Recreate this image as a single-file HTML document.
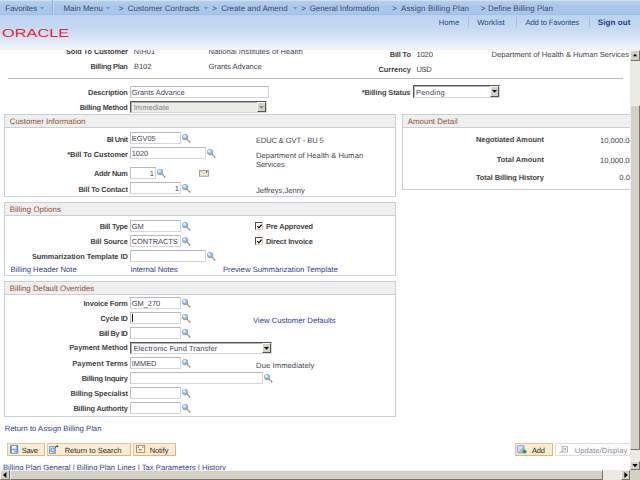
<!DOCTYPE html><html><head><meta charset='utf-8'><title>Define Billing Plan</title><style>
html,body{margin:0;padding:0;}
body{width:640px;height:480px;overflow:hidden;position:relative;background:#fff;font-family:"Liberation Sans",Arial,sans-serif;font-size:7.6px;color:#3c3c3c;text-rendering:geometricPrecision;}
.a{position:absolute;white-space:nowrap;line-height:10px;height:10px;}
.in{position:absolute;box-sizing:border-box;background:#fff;border:1px solid #d6d6d6;border-top-color:#b9b9b9;border-left-color:#c2c2c2;}
.gh{position:absolute;box-sizing:border-box;background:#efefef;border:1px solid #c9d1d8;}
.gb{position:absolute;box-sizing:border-box;border:1px solid #c9d1d8;border-top:none;background:#fff;}
.btn{position:absolute;box-sizing:border-box;border:1px solid #e9c590;border-bottom-color:#e2b676;border-right-color:#e2b676;background:#fcedd2;}
.sel{position:absolute;box-sizing:border-box;background:#fff;border:1px solid #555;border-right-color:#d6d6d2;border-bottom-color:#d6d6d2;box-shadow:inset 1px 1px 0 #b4b4b4;}
.dd{position:absolute;box-sizing:border-box;background:#d4d0c8;border:1px solid #f8f8f8;border-right-color:#555;border-bottom-color:#555;}
svg{position:absolute;overflow:visible}
</style></head><body>
<div class='a' style='left:65.95px;top:47.00px;font-size:7.4px;font-weight:bold;letter-spacing:-0.077px;color:#424242'>Sold To Customer</div>
<div class='a' style='left:133.45px;top:47.00px;font-size:7.6px;letter-spacing:0.055px;color:#47434f'>NIH01</div>
<div class='a' style='left:208.45px;top:47.00px;font-size:7.6px;letter-spacing:0.049px;color:#47434f'>National Institutes of Health</div>
<div class='a' style='left:389.70px;top:50.00px;font-size:7.4px;font-weight:bold;letter-spacing:-0.130px;color:#424242'>Bill To</div>
<div class='a' style='left:416.45px;top:50.00px;font-size:7.6px;letter-spacing:-0.135px;color:#47434f'>1020</div>
<div class='a' style='left:491.45px;top:50.00px;font-size:7.6px;letter-spacing:0.009px;color:#47434f'>Department of Health &amp; Human Services</div>
<div class='a' style='left:90.45px;top:62.00px;font-size:7.4px;font-weight:bold;letter-spacing:-0.255px;color:#424242'>Billing Plan</div>
<div class='a' style='left:133.95px;top:62.00px;font-size:7.6px;letter-spacing:-0.083px;color:#47434f'>B102</div>
<div class='a' style='left:208.45px;top:62.00px;font-size:7.6px;letter-spacing:-0.060px;color:#47434f'>Grants Advance</div>
<div class='a' style='left:378.45px;top:65.00px;font-size:7.4px;font-weight:bold;letter-spacing:0.007px;color:#424242'>Currency</div>
<div class='a' style='left:416.45px;top:65.00px;font-size:7.6px;letter-spacing:-0.398px;color:#47434f'>USD</div>
<div style='position:absolute;left:8px;top:78px;width:615px;height:1px;background:#bdbdbd'></div>
<div class='a' style='left:87.95px;top:88.00px;font-size:7.4px;font-weight:bold;letter-spacing:-0.071px;color:#424242'>Description</div>
<div class='in' style='left:130px;top:86px;width:139px;height:12px'></div>
<div class='a' style='left:131.70px;top:88.00px;font-size:7.45px;letter-spacing:0.006px;color:#4b4060'>Grants Advance</div>
<div class='a' style='left:361.70px;top:88.00px;font-size:7.4px;font-weight:bold;letter-spacing:-0.097px;color:#424242'>*Billing Status</div>
<div class='sel' style='left:413px;top:85px;width:87px;height:13px;'></div>
<div class='dd' style='left:490px;top:86px;width:9px;height:11px'></div>
<svg style='left:492px;top:90.3px;width:5px;height:3px' viewBox='0 0 5 3'><path d='M0 0H5L2.5 2.8Z' fill='#000'/></svg>
<div class='a' style='left:415.95px;top:88.00px;font-size:7.45px;letter-spacing:0.242px;color:#4b4060'>Pending</div>
<div class='a' style='left:79.70px;top:103.00px;font-size:7.4px;font-weight:bold;letter-spacing:-0.208px;color:#424242'>Billing Method</div>
<div class='sel' style='left:130px;top:101px;width:137px;height:12px;background:#ebebe8;'></div>
<div class='dd' style='left:257px;top:102px;width:9px;height:10px'></div>
<svg style='left:259px;top:105.8px;width:5px;height:3px' viewBox='0 0 5 3'><path d='M0 0H5L2.5 2.8Z' fill='#8a8a8a'/></svg>
<div class='a' style='left:133.70px;top:103.00px;font-size:7.45px;letter-spacing:0.096px;color:#808080'>Immediate</div>
<div class='gh' style='left:4px;top:114px;width:392px;height:14px'></div>
<div class='gb' style='left:4px;top:128px;width:392px;height:69px'></div>
<div class='a' style='left:9.70px;top:117.00px;font-size:7.9px;letter-spacing:-0.007px;color:#96502f'>Customer Information</div>
<div class='a' style='left:106.70px;top:135.00px;font-size:7.4px;font-weight:bold;letter-spacing:-0.435px;color:#424242'>BI Unit</div>
<div class='in' style='left:130px;top:132px;width:51px;height:12px'></div>
<div class='a' style='left:131.70px;top:134.00px;font-size:7.45px;color:#4b4060'>EGV05</div>
<svg style='left:181.8px;top:133.7px;width:10px;height:10px' viewBox='0 0 10 10'><line x1='5.2' y1='5.2' x2='7.7' y2='7.8' stroke='#e2923c' stroke-width='1.3' stroke-linecap='round'/><circle cx='7.8' cy='8' r='.6' fill='#4a70c4'/><circle cx='3.1' cy='3.1' r='2.8' fill='#6eaeec' stroke='#8f9aa8' stroke-width='.6'/><circle cx='2.7' cy='2.6' r='2' fill='#a9d1f8'/><circle cx='2.3' cy='2.2' r='1.1' fill='#e4f1ff'/></svg>
<div class='a' style='left:255.90px;top:136.00px;font-size:7.6px;letter-spacing:-0.132px;color:#47434f'>EDUC &amp; GVT - BU 5</div>
<div class='a' style='left:67.20px;top:150.00px;font-size:7.4px;font-weight:bold;letter-spacing:-0.048px;color:#424242'>*Bill To Customer</div>
<div class='in' style='left:130px;top:147px;width:76px;height:12px'></div>
<div class='a' style='left:131.70px;top:149.00px;font-size:7.45px;color:#4b4060'>1020</div>
<svg style='left:206.8px;top:148.8px;width:10px;height:10px' viewBox='0 0 10 10'><line x1='5.2' y1='5.2' x2='7.7' y2='7.8' stroke='#e2923c' stroke-width='1.3' stroke-linecap='round'/><circle cx='7.8' cy='8' r='.6' fill='#4a70c4'/><circle cx='3.1' cy='3.1' r='2.8' fill='#6eaeec' stroke='#8f9aa8' stroke-width='.6'/><circle cx='2.7' cy='2.6' r='2' fill='#a9d1f8'/><circle cx='2.3' cy='2.2' r='1.1' fill='#e4f1ff'/></svg>
<div class='a' style='left:255.90px;top:151.00px;font-size:7.6px;letter-spacing:0.050px;color:#47434f'>Department of Health &amp; Human</div>
<div class='a' style='left:255.90px;top:160.00px;font-size:7.6px;letter-spacing:-0.046px;color:#47434f'>Services</div>
<div class='a' style='left:93.95px;top:169.00px;font-size:7.4px;font-weight:bold;letter-spacing:-0.255px;color:#424242'>Addr Num</div>
<div class='in' style='left:130px;top:167px;width:26px;height:12px'></div>
<div class='a' style='right:486.20px;text-align:right;top:169.00px;font-size:7.45px;color:#4b4060'>1</div>
<svg style='left:157.0px;top:168.5px;width:10px;height:10px' viewBox='0 0 10 10'><line x1='5.2' y1='5.2' x2='7.7' y2='7.8' stroke='#e2923c' stroke-width='1.3' stroke-linecap='round'/><circle cx='7.8' cy='8' r='.6' fill='#4a70c4'/><circle cx='3.1' cy='3.1' r='2.8' fill='#6eaeec' stroke='#8f9aa8' stroke-width='.6'/><circle cx='2.7' cy='2.6' r='2' fill='#a9d1f8'/><circle cx='2.3' cy='2.2' r='1.1' fill='#e4f1ff'/></svg>
<svg style='left:198.8px;top:170.2px;width:10px;height:6.6px' viewBox='0 0 10 6.6'><rect x='.4' y='.4' width='9.2' height='5.8' fill='#f6edc9' stroke='#8a8a86' stroke-width='.8'/><path d='M.6 .6L5 3.8L9.4 .6' fill='none' stroke='#b9ad86' stroke-width='.6'/><rect x='7' y='1' width='1.2' height='1.6' fill='#b45'/></svg>
<div class='a' style='left:78.45px;top:185.00px;font-size:7.4px;font-weight:bold;letter-spacing:-0.153px;color:#424242'>Bill To Contact</div>
<div class='in' style='left:130px;top:182px;width:51px;height:12px'></div>
<div class='a' style='right:461.20px;text-align:right;top:184.00px;font-size:7.45px;color:#4b4060'>1</div>
<svg style='left:181.7px;top:183.8px;width:10px;height:10px' viewBox='0 0 10 10'><line x1='5.2' y1='5.2' x2='7.7' y2='7.8' stroke='#e2923c' stroke-width='1.3' stroke-linecap='round'/><circle cx='7.8' cy='8' r='.6' fill='#4a70c4'/><circle cx='3.1' cy='3.1' r='2.8' fill='#6eaeec' stroke='#8f9aa8' stroke-width='.6'/><circle cx='2.7' cy='2.6' r='2' fill='#a9d1f8'/><circle cx='2.3' cy='2.2' r='1.1' fill='#e4f1ff'/></svg>
<div class='a' style='left:255.90px;top:186.00px;font-size:7.6px;letter-spacing:-0.002px;color:#47434f'>Jeffreys,Jenny</div>
<div class='gh' style='left:402px;top:114px;width:240px;height:14px'></div>
<div class='gb' style='left:402px;top:128px;width:240px;height:62px'></div>
<div class='a' style='left:407.70px;top:117.00px;font-size:7.9px;letter-spacing:0.036px;color:#96502f'>Amount Detail</div>
<div class='a' style='left:475.95px;top:135.00px;font-size:7.4px;font-weight:bold;letter-spacing:0.007px;color:#424242'>Negotiated Amount</div>
<div class='a' style='left:600.00px;top:136.00px;font-size:7.6px;color:#47434f'>10,000.00</div>
<div class='a' style='left:496.70px;top:155.00px;font-size:7.4px;font-weight:bold;letter-spacing:0.041px;color:#424242'>Total Amount</div>
<div class='a' style='left:600.00px;top:156.00px;font-size:7.6px;color:#47434f'>10,000.00</div>
<div class='a' style='left:475.95px;top:173.00px;font-size:7.4px;font-weight:bold;letter-spacing:-0.071px;color:#424242'>Total Billing History</div>
<div class='a' style='left:619.30px;top:173.00px;font-size:7.6px;color:#47434f'>0.00</div>
<div class='gh' style='left:4px;top:202px;width:392px;height:14px'></div>
<div class='gb' style='left:4px;top:216px;width:392px;height:60px'></div>
<div class='a' style='left:9.70px;top:205.00px;font-size:7.9px;letter-spacing:0.057px;color:#96502f'>Billing Options</div>
<div class='a' style='left:99.70px;top:222.00px;font-size:7.4px;font-weight:bold;letter-spacing:-0.258px;color:#424242'>Bill Type</div>
<div class='in' style='left:130px;top:220px;width:51px;height:12px'></div>
<div class='a' style='left:131.70px;top:222.00px;font-size:7.45px;color:#4b4060'>GM</div>
<svg style='left:181.7px;top:221.9px;width:10px;height:10px' viewBox='0 0 10 10'><line x1='5.2' y1='5.2' x2='7.7' y2='7.8' stroke='#e2923c' stroke-width='1.3' stroke-linecap='round'/><circle cx='7.8' cy='8' r='.6' fill='#4a70c4'/><circle cx='3.1' cy='3.1' r='2.8' fill='#6eaeec' stroke='#8f9aa8' stroke-width='.6'/><circle cx='2.7' cy='2.6' r='2' fill='#a9d1f8'/><circle cx='2.3' cy='2.2' r='1.1' fill='#e4f1ff'/></svg>
<div class='a' style='left:90.45px;top:237.00px;font-size:7.4px;font-weight:bold;letter-spacing:-0.116px;color:#424242'>Bill Source</div>
<div class='in' style='left:130px;top:235px;width:51px;height:12px'></div>
<div class='a' style='left:131.70px;top:237.00px;font-size:7.45px;letter-spacing:-0.023px;color:#4b4060'>CONTRACTS</div>
<svg style='left:181.7px;top:236.9px;width:10px;height:10px' viewBox='0 0 10 10'><line x1='5.2' y1='5.2' x2='7.7' y2='7.8' stroke='#e2923c' stroke-width='1.3' stroke-linecap='round'/><circle cx='7.8' cy='8' r='.6' fill='#4a70c4'/><circle cx='3.1' cy='3.1' r='2.8' fill='#6eaeec' stroke='#8f9aa8' stroke-width='.6'/><circle cx='2.7' cy='2.6' r='2' fill='#a9d1f8'/><circle cx='2.3' cy='2.2' r='1.1' fill='#e4f1ff'/></svg>
<div class='a' style='left:31.90px;top:252.00px;font-size:7.4px;font-weight:bold;letter-spacing:-0.016px;color:#424242'>Summarization Template ID</div>
<div class='in' style='left:130px;top:250px;width:76px;height:12px'></div>
<svg style='left:206.9px;top:251.9px;width:10px;height:10px' viewBox='0 0 10 10'><line x1='5.2' y1='5.2' x2='7.7' y2='7.8' stroke='#e2923c' stroke-width='1.3' stroke-linecap='round'/><circle cx='7.8' cy='8' r='.6' fill='#4a70c4'/><circle cx='3.1' cy='3.1' r='2.8' fill='#6eaeec' stroke='#8f9aa8' stroke-width='.6'/><circle cx='2.7' cy='2.6' r='2' fill='#a9d1f8'/><circle cx='2.3' cy='2.2' r='1.1' fill='#e4f1ff'/></svg>
<div style='position:absolute;left:255px;top:222px;width:8px;height:8px;box-sizing:border-box;border:1px solid #505050;border-right-color:#d8d4cc;border-bottom-color:#d8d4cc;background:#fff'></div>
<svg style='left:256.5px;top:223.5px;width:5px;height:5px' viewBox='0 0 5 5'><path d='M.4 2.2L1.9 3.8L4.6 .6' fill='none' stroke='#000' stroke-width='1.2'/></svg>
<div class='a' style='left:265.90px;top:222.00px;font-size:7.4px;font-weight:bold;letter-spacing:-0.103px;color:#424242'>Pre Approved</div>
<div style='position:absolute;left:255px;top:237px;width:8px;height:8px;box-sizing:border-box;border:1px solid #505050;border-right-color:#d8d4cc;border-bottom-color:#d8d4cc;background:#fff'></div>
<svg style='left:256.5px;top:238.5px;width:5px;height:5px' viewBox='0 0 5 5'><path d='M.4 2.2L1.9 3.8L4.6 .6' fill='none' stroke='#000' stroke-width='1.2'/></svg>
<div class='a' style='left:265.90px;top:237.00px;font-size:7.4px;font-weight:bold;letter-spacing:-0.109px;color:#424242'>Direct Invoice</div>
<div class='a' style='left:10.45px;top:265.00px;font-size:7.7px;letter-spacing:0.001px;color:#2b3c9c'>Billing Header Note</div>
<div class='a' style='left:130.45px;top:265.00px;font-size:7.7px;letter-spacing:-0.047px;color:#2b3c9c'>Internal Notes</div>
<div class='a' style='left:222.95px;top:265.00px;font-size:7.7px;letter-spacing:0.028px;color:#2b3c9c'>Preview Summarization Template</div>
<div class='gh' style='left:4px;top:281px;width:392px;height:14px'></div>
<div class='gb' style='left:4px;top:295px;width:392px;height:122px'></div>
<div class='a' style='left:9.70px;top:284.00px;font-size:7.9px;letter-spacing:-0.006px;color:#96502f'>Billing Default Overrides</div>
<div class='a' style='left:83.45px;top:299.00px;font-size:7.4px;font-weight:bold;letter-spacing:-0.141px;color:#424242'>Invoice Form</div>
<div class='in' style='left:130px;top:297px;width:51px;height:12px'></div>
<div class='a' style='left:131.70px;top:299.00px;font-size:7.45px;color:#4b4060'>GM_270</div>
<svg style='left:181.7px;top:299.1px;width:10px;height:10px' viewBox='0 0 10 10'><line x1='5.2' y1='5.2' x2='7.7' y2='7.8' stroke='#e2923c' stroke-width='1.3' stroke-linecap='round'/><circle cx='7.8' cy='8' r='.6' fill='#4a70c4'/><circle cx='3.1' cy='3.1' r='2.8' fill='#6eaeec' stroke='#8f9aa8' stroke-width='.6'/><circle cx='2.7' cy='2.6' r='2' fill='#a9d1f8'/><circle cx='2.3' cy='2.2' r='1.1' fill='#e4f1ff'/></svg>
<div class='a' style='left:100.45px;top:314.00px;font-size:7.4px;font-weight:bold;letter-spacing:-0.246px;color:#424242'>Cycle ID</div>
<div class='in' style='left:130px;top:312px;width:51px;height:12px'></div>
<svg style='left:181.7px;top:314.1px;width:10px;height:10px' viewBox='0 0 10 10'><line x1='5.2' y1='5.2' x2='7.7' y2='7.8' stroke='#e2923c' stroke-width='1.3' stroke-linecap='round'/><circle cx='7.8' cy='8' r='.6' fill='#4a70c4'/><circle cx='3.1' cy='3.1' r='2.8' fill='#6eaeec' stroke='#8f9aa8' stroke-width='.6'/><circle cx='2.7' cy='2.6' r='2' fill='#a9d1f8'/><circle cx='2.3' cy='2.2' r='1.1' fill='#e4f1ff'/></svg>
<div style='position:absolute;left:132px;top:314px;width:1px;height:8px;background:#111'></div>
<div class='a' style='left:252.90px;top:316.00px;font-size:7.7px;letter-spacing:0.022px;color:#2b3c9c'>View Customer Defaults</div>
<div class='a' style='left:98.95px;top:329.00px;font-size:7.4px;font-weight:bold;letter-spacing:-0.389px;color:#424242'>Bill By ID</div>
<div class='in' style='left:130px;top:327px;width:51px;height:12px'></div>
<svg style='left:181.7px;top:329.1px;width:10px;height:10px' viewBox='0 0 10 10'><line x1='5.2' y1='5.2' x2='7.7' y2='7.8' stroke='#e2923c' stroke-width='1.3' stroke-linecap='round'/><circle cx='7.8' cy='8' r='.6' fill='#4a70c4'/><circle cx='3.1' cy='3.1' r='2.8' fill='#6eaeec' stroke='#8f9aa8' stroke-width='.6'/><circle cx='2.7' cy='2.6' r='2' fill='#a9d1f8'/><circle cx='2.3' cy='2.2' r='1.1' fill='#e4f1ff'/></svg>
<div class='a' style='left:69.20px;top:343.00px;font-size:7.4px;font-weight:bold;letter-spacing:-0.034px;color:#424242'>Payment Method</div>
<div class='sel' style='left:130px;top:342px;width:142px;height:12px;'></div>
<div class='dd' style='left:262px;top:343px;width:9px;height:10px'></div>
<svg style='left:264px;top:346.8px;width:5px;height:3px' viewBox='0 0 5 3'><path d='M0 0H5L2.5 2.8Z' fill='#000'/></svg>
<div class='a' style='left:133.45px;top:344.00px;font-size:7.45px;letter-spacing:0.118px;color:#4b4060'>Electronic Fund Transfer</div>
<div class='a' style='left:72.20px;top:359.00px;font-size:7.4px;font-weight:bold;letter-spacing:0.100px;color:#424242'>Payment Terms</div>
<div class='in' style='left:130px;top:357px;width:51px;height:12px'></div>
<div class='a' style='left:131.70px;top:359.00px;font-size:7.45px;color:#4b4060'>IMMED</div>
<svg style='left:181.7px;top:359.1px;width:10px;height:10px' viewBox='0 0 10 10'><line x1='5.2' y1='5.2' x2='7.7' y2='7.8' stroke='#e2923c' stroke-width='1.3' stroke-linecap='round'/><circle cx='7.8' cy='8' r='.6' fill='#4a70c4'/><circle cx='3.1' cy='3.1' r='2.8' fill='#6eaeec' stroke='#8f9aa8' stroke-width='.6'/><circle cx='2.7' cy='2.6' r='2' fill='#a9d1f8'/><circle cx='2.3' cy='2.2' r='1.1' fill='#e4f1ff'/></svg>
<div class='a' style='left:256.10px;top:361.00px;font-size:7.6px;letter-spacing:0.094px;color:#47434f'>Due Immediately</div>
<div class='a' style='left:81.70px;top:374.00px;font-size:7.4px;font-weight:bold;letter-spacing:-0.220px;color:#424242'>Billing Inquiry</div>
<div class='in' style='left:130px;top:372px;width:133px;height:12px'></div>
<svg style='left:263.7px;top:374.1px;width:10px;height:10px' viewBox='0 0 10 10'><line x1='5.2' y1='5.2' x2='7.7' y2='7.8' stroke='#e2923c' stroke-width='1.3' stroke-linecap='round'/><circle cx='7.8' cy='8' r='.6' fill='#4a70c4'/><circle cx='3.1' cy='3.1' r='2.8' fill='#6eaeec' stroke='#8f9aa8' stroke-width='.6'/><circle cx='2.7' cy='2.6' r='2' fill='#a9d1f8'/><circle cx='2.3' cy='2.2' r='1.1' fill='#e4f1ff'/></svg>
<div class='a' style='left:70.45px;top:389.00px;font-size:7.4px;font-weight:bold;letter-spacing:-0.099px;color:#424242'>Billing Specialist</div>
<div class='in' style='left:130px;top:387px;width:51px;height:12px'></div>
<svg style='left:181.7px;top:389.1px;width:10px;height:10px' viewBox='0 0 10 10'><line x1='5.2' y1='5.2' x2='7.7' y2='7.8' stroke='#e2923c' stroke-width='1.3' stroke-linecap='round'/><circle cx='7.8' cy='8' r='.6' fill='#4a70c4'/><circle cx='3.1' cy='3.1' r='2.8' fill='#6eaeec' stroke='#8f9aa8' stroke-width='.6'/><circle cx='2.7' cy='2.6' r='2' fill='#a9d1f8'/><circle cx='2.3' cy='2.2' r='1.1' fill='#e4f1ff'/></svg>
<div class='a' style='left:73.45px;top:404.00px;font-size:7.4px;font-weight:bold;letter-spacing:-0.172px;color:#424242'>Billing Authority</div>
<div class='in' style='left:130px;top:402px;width:51px;height:12px'></div>
<svg style='left:181.7px;top:404.1px;width:10px;height:10px' viewBox='0 0 10 10'><line x1='5.2' y1='5.2' x2='7.7' y2='7.8' stroke='#e2923c' stroke-width='1.3' stroke-linecap='round'/><circle cx='7.8' cy='8' r='.6' fill='#4a70c4'/><circle cx='3.1' cy='3.1' r='2.8' fill='#6eaeec' stroke='#8f9aa8' stroke-width='.6'/><circle cx='2.7' cy='2.6' r='2' fill='#a9d1f8'/><circle cx='2.3' cy='2.2' r='1.1' fill='#e4f1ff'/></svg>
<div class='a' style='left:4.70px;top:424.00px;font-size:7.7px;letter-spacing:0.006px;color:#2b3c9c'>Return to Assign Billing Plan</div>
<div class='btn' style='left:7px;top:443px;width:38px;height:13px;'></div>
<svg style='left:9.8px;top:445.4px;width:8.2px;height:8.6px' viewBox='0 0 8.2 8.6'><rect x='.4' y='.4' width='7.4' height='7.8' rx='.5' fill='#6c9ee4' stroke='#4a7cc8' stroke-width='.8'/><rect x='1.9' y='.9' width='4.4' height='2.9' fill='#f4f8fe'/><rect x='1.9' y='5' width='4.4' height='3' fill='#e4edfa'/><rect x='4.4' y='5.6' width='1.1' height='2' fill='#4a7cc8'/></svg>
<div class='a' style='left:21.70px;top:446.00px;font-size:7.5px;letter-spacing:-0.286px;color:#2a2a2a'>Save</div>
<div class='btn' style='left:47px;top:443px;width:84px;height:13px;'></div>
<svg style='left:49px;top:444.8px;width:11px;height:9.6px' viewBox='0 0 11 9.6'><rect x='.4' y='1.6' width='6' height='7' fill='#d6e6fa' stroke='#6a92d0' stroke-width='.8'/><circle cx='3.8' cy='5' r='2.1' fill='#a9d2f7' stroke='#4f7fc0' stroke-width='.7'/><line x1='5.2' y1='6.8' x2='6.8' y2='8.9' stroke='#e2923c' stroke-width='1.3'/><path d='M6.2 3C6.6 1.6 7.4 1 8.4 1.2' fill='none' stroke='#333' stroke-width='.8'/><path d='M7.6 .2L9.8 1.6L7.8 2.6Z' fill='#333'/></svg>
<div class='a' style='left:64.70px;top:446.00px;font-size:7.5px;letter-spacing:0.003px;color:#2a2a2a'>Return to Search</div>
<div class='btn' style='left:133px;top:443px;width:43px;height:13px;'></div>
<svg style='left:135.6px;top:445.4px;width:9.2px;height:7.8px' viewBox='0 0 9.2 7.8'><rect x='.5' y='.5' width='8.2' height='6.8' fill='#fffaf2' stroke='#b87d50' stroke-width='.9'/><circle cx='2.3' cy='2.2' r='.8' fill='#d8482c'/><circle cx='6.9' cy='2.2' r='.8' fill='#3fae4a'/><path d='M2.6 4.6H5.6' stroke='#b4642c' stroke-width='1.3'/></svg>
<div class='a' style='left:149.70px;top:446.00px;font-size:7.5px;letter-spacing:-0.084px;color:#2a2a2a'>Notify</div>
<div class='btn' style='left:515px;top:443px;width:38px;height:13px;'></div>
<svg style='left:517px;top:445.1px;width:10px;height:9px' viewBox='0 0 10 9'><rect x='.4' y='.4' width='6.6' height='7.6' rx='.9' fill='#9dbfee' stroke='#7a9fd6' stroke-width='.8'/><path d='M1 1H6.4L1 7.4Z' fill='#d3e3f9'/><path d='M7.6 4.6V8.8M5.5 6.7H9.7' stroke='#1f9a34' stroke-width='1.7'/></svg>
<div class='a' style='left:532.10px;top:446.00px;font-size:7.5px;letter-spacing:-0.230px;color:#2a2a2a'>Add</div>
<div class='btn' style='left:555px;top:443px;width:80px;height:13px;background:#fff;border-color:#dedede;'></div>
<svg style='left:559px;top:446px;width:9px;height:8px' viewBox='0 0 9 8'><rect x='3' y='.4' width='5.4' height='5.6' fill='#f6f6f6' stroke='#a8a8a8' stroke-width='.8'/><path d='M.4 7.2L3.2 5' stroke='#a0a0a0' stroke-width='1'/><path d='M5 2v2.4M6.4 2v2.4' stroke='#9a9a9a' stroke-width='.8'/></svg>
<div class='a' style='left:574.70px;top:446.00px;font-size:7.5px;letter-spacing:0.126px;color:#9487a3'>Update/Display</div>
<div class='a' style='left:2.90px;top:463.00px;font-size:7.7px;letter-spacing:0.008px;color:#2b3c9c'>Billing Plan General | Billing Plan Lines | Tax Parameters | History</div>
<div style='position:absolute;left:0;top:15px;width:640px;height:35px;background:linear-gradient(#bcd3f0 0%,#c6daf2 40%,#dfe9f8 75%,#f2f6fc 97%,#e4eaf2 100%)'></div>
<div style='position:absolute;left:0;top:0;width:640px;height:15px;background:linear-gradient(#b6cfee 0,#aac7ea 5px,#a8c5ea 14px);border-top:1px solid #cfdff4;border-bottom:1px solid #a0bee3;box-sizing:border-box'></div>
<div style='position:absolute;left:52px;top:0;width:1px;height:15px;background:#8fb1db'></div>
<div style='position:absolute;left:53px;top:0;width:1px;height:15px;background:#c4d8f1'></div>
<div class='a' style='left:5.20px;top:4.00px;font-size:8.0px;letter-spacing:-0.113px;color:#3c4b6b'>Favorites</div>
<svg style='left:39.5px;top:7px;width:4.4px;height:2.6px' viewBox='0 0 4.4 2.6'><path d='M0 0H4.4L2.2 2.6Z' fill='#6896d2'/></svg>
<div class='a' style='left:63.45px;top:4.00px;font-size:8.0px;letter-spacing:-0.010px;color:#3c4b6b'>Main Menu</div>
<svg style='left:105.5px;top:7px;width:4.4px;height:2.6px' viewBox='0 0 4.4 2.6'><path d='M0 0H4.4L2.2 2.6Z' fill='#6896d2'/></svg>
<div class='a' style='left:118.70px;top:4.00px;font-size:8.0px;color:#3c4b6b'>></div>
<div class='a' style='left:127.70px;top:4.00px;font-size:8.0px;letter-spacing:0.021px;color:#3c4b6b'>Customer Contracts</div>
<svg style='left:203.75px;top:7px;width:4.4px;height:2.6px' viewBox='0 0 4.4 2.6'><path d='M0 0H4.4L2.2 2.6Z' fill='#6896d2'/></svg>
<div class='a' style='left:212.20px;top:4.00px;font-size:8.0px;color:#3c4b6b'>></div>
<div class='a' style='left:221.20px;top:4.00px;font-size:8.0px;letter-spacing:-0.015px;color:#3c4b6b'>Create and Amend</div>
<svg style='left:292.5px;top:7px;width:4.4px;height:2.6px' viewBox='0 0 4.4 2.6'><path d='M0 0H4.4L2.2 2.6Z' fill='#6896d2'/></svg>
<div class='a' style='left:301.20px;top:4.00px;font-size:8.0px;color:#3c4b6b'>></div>
<div class='a' style='left:309.70px;top:4.00px;font-size:8.0px;letter-spacing:-0.067px;color:#3c4b6b'>General Information</div>
<div class='a' style='left:392.20px;top:4.00px;font-size:8.0px;color:#3c4b6b'>></div>
<div class='a' style='left:400.95px;top:4.00px;font-size:8.0px;letter-spacing:0.122px;color:#3c4b6b'>Assign Billing Plan</div>
<div class='a' style='left:480.70px;top:4.00px;font-size:8.0px;color:#3c4b6b'>></div>
<div class='a' style='left:487.95px;top:4.00px;font-size:8.0px;letter-spacing:0.003px;color:#3c4b6b'>Define Billing Plan</div>
<div class='a' style='left:438.70px;top:18.00px;font-size:7.7px;letter-spacing:-0.005px;color:#27478c'>Home</div>
<div class='a' style='left:477.20px;top:18.00px;font-size:7.7px;letter-spacing:0.042px;color:#27478c'>Worklist</div>
<div class='a' style='left:525.45px;top:18.00px;font-size:7.7px;letter-spacing:-0.149px;color:#27478c'>Add to Favorites</div>
<div class='a' style='left:597.70px;top:18.00px;font-size:8.0px;font-weight:bold;letter-spacing:0.107px;color:#1d3b8a'>Sign out</div>
<div style='position:absolute;left:468px;top:17px;width:1px;height:10px;background:#a9bedc'></div>
<div style='position:absolute;left:516px;top:17px;width:1px;height:10px;background:#a9bedc'></div>
<div style='position:absolute;left:589px;top:17px;width:1px;height:10px;background:#a9bedc'></div>
<div style='position:absolute;left:2.3px;top:27.6px;font-size:11.6px;line-height:12px;color:#e8262e;transform:scaleX(1.41);transform-origin:0 0;white-space:nowrap'>ORACLE</div>
<div style='position:absolute;left:630px;top:50px;width:10px;height:420px;background:#eceae4;'></div>
<div style='position:absolute;left:630px;top:50px;width:10px;height:10.5px;box-sizing:border-box;background:#d4d0c8;border:1px solid #f2f0ea;border-right-color:#77746c;border-bottom-color:#77746c'></div>
<svg style='left:630px;top:50px;width:10px;height:10px' viewBox='0 0 10 10'><path d='M2.8 6.3H7.2L5 3.8Z' fill='#000'/></svg>
<div style='position:absolute;left:630px;top:105px;width:10px;height:344.5px;box-sizing:border-box;background:#d4d0c8;border:1px solid #f2f0ea;border-right-color:#77746c;border-bottom-color:#77746c'></div>
<div style='position:absolute;left:630px;top:461px;width:10px;height:9px;box-sizing:border-box;background:#d4d0c8;border:1px solid #f2f0ea;border-right-color:#77746c;border-bottom-color:#77746c'></div>
<svg style='left:630px;top:461px;width:10px;height:10px' viewBox='0 0 10 10'><path d='M2.2 3H7.8L5 6.2Z' fill='#000'/></svg>
<div style='position:absolute;left:0;top:470px;width:630px;height:10px;background:#eceae4;'></div>
<div style='position:absolute;left:0px;top:470px;width:10px;height:10px;box-sizing:border-box;background:#d4d0c8;border:1px solid #f2f0ea;border-right-color:#77746c;border-bottom-color:#77746c'></div>
<svg style='left:0px;top:470px;width:10px;height:10px' viewBox='0 0 10 10'><path d='M6.4 1.9V8.1L3 5Z' fill='#000'/></svg>
<div style='position:absolute;left:10px;top:470px;width:593px;height:10px;box-sizing:border-box;background:#d4d0c8;border:1px solid #f2f0ea;border-right-color:#77746c;border-bottom-color:#77746c'></div>
<div style='position:absolute;left:621px;top:470px;width:9px;height:10px;box-sizing:border-box;background:#d4d0c8;border:1px solid #f2f0ea;border-right-color:#77746c;border-bottom-color:#77746c'></div>
<svg style='left:621px;top:470px;width:10px;height:10px' viewBox='0 0 10 10'><path d='M3.4 1.9V8.1L6.8 5Z' fill='#000'/></svg>
<div style='position:absolute;left:630px;top:470px;width:10px;height:10px;background:#d4d0c8'></div>
</body></html>
